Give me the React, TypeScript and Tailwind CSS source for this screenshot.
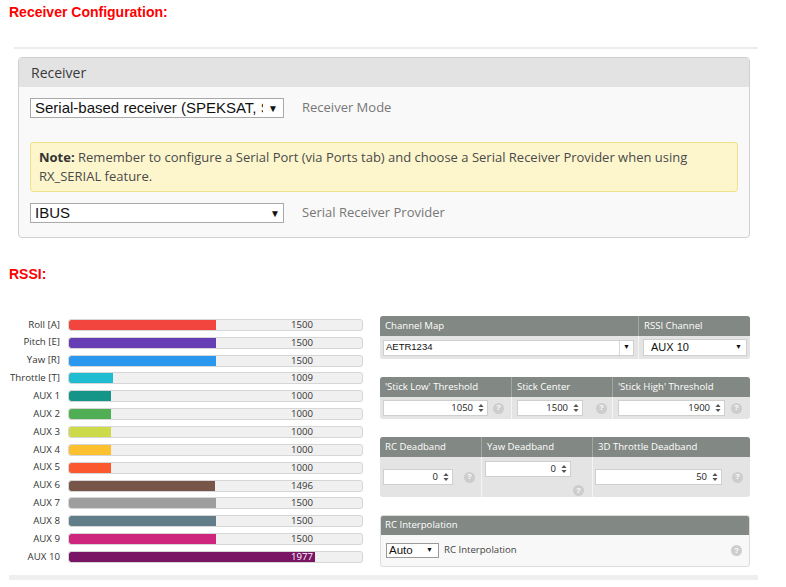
import React from "react";

const SANS = "font-['Open_Sans',sans-serif]";
const ARIAL = "font-['Liberation_Sans',Arial,sans-serif]";

// channel bars: range 800..2200 like the configurator
const CHANNELS: { name: string; value: number; color: string }[] = [
  { name: "Roll [A]", value: 1500, color: "#f1453d" },
  { name: "Pitch [E]", value: 1500, color: "#673fb4" },
  { name: "Yaw [R]", value: 1500, color: "#2b98f0" },
  { name: "Throttle [T]", value: 1009, color: "#1fbcd2" },
  { name: "AUX 1", value: 1000, color: "#159588" },
  { name: "AUX 2", value: 1000, color: "#50ae55" },
  { name: "AUX 3", value: 1000, color: "#cdda49" },
  { name: "AUX 4", value: 1000, color: "#fdc02f" },
  { name: "AUX 5", value: 1000, color: "#fc5830" },
  { name: "AUX 6", value: 1496, color: "#785549" },
  { name: "AUX 7", value: 1500, color: "#9e9e9e" },
  { name: "AUX 8", value: 1500, color: "#617d8a" },
  { name: "AUX 9", value: 1500, color: "#cf267d" },
  { name: "AUX 10", value: 1977, color: "#7a1464" },
];

function Help() {
  return (
    <span className={`inline-flex h-[11px] w-[11px] shrink-0 items-center justify-center rounded-full bg-[#cdcdcd] text-[8px] font-bold leading-none text-white ${ARIAL}`}>
      ?
    </span>
  );
}

function Spinner() {
  return (
    <svg width="6" height="10" viewBox="0 0 6 10" className="shrink-0">
      <path d="M3 1 L5.6 4 H0.4Z M3 9 L5.6 6 H0.4Z" fill="#555" />
    </svg>
  );
}

function NumberBox({ value, width }: { value: string; width: string }) {
  return (
    <div className={`flex h-[16px] shrink-0 items-center justify-end gap-[5px] border border-[#cfcfcf] bg-white pr-[3px] ${width}`}>
      <span className={`text-[9.5px] leading-none text-[#222] ${SANS}`}>{value}</span>
      <Spinner />
    </div>
  );
}

function Bar({ value, color }: { value: number; color: string }) {
  const pct = ((value - 800) / 1400) * 100;
  const covered = pct > 82;
  return (
    <div className="relative h-[12px] w-[295px] overflow-hidden rounded-[3px] border border-[#d6d6d6] bg-[#f0f0f0]">
      <div className="h-full rounded-l-[2px]" style={{ width: `${pct}%`, backgroundColor: color }} />
      <span
        className={`absolute right-[49px] top-0 text-[9.6px] leading-[10px] ${SANS} ${covered ? "text-white" : "text-[#333]"}`}
      >
        {value}
      </span>
    </div>
  );
}

function PanelHead({ children, className = "" }: { children: React.ReactNode; className?: string }) {
  return (
    <div className={`flex h-[20px] items-center pl-[5px] text-[9.6px] text-white ${SANS} ${className}`}>{children}</div>
  );
}

export default function App() {
  return (
    <div className="h-[587px] w-[786px] overflow-hidden bg-white">
      {/* Receiver configuration */}
      <div className={`pl-[9px] pt-[4px] text-[14px] font-bold leading-[16px] text-[#ff0000] ${ARIAL}`}>
        Receiver Configuration:
      </div>
      <div className="ml-[14px] mt-[27px] h-[2px] w-[744px] bg-[#ececec]" />

      <div className="ml-[18px] mt-[8px] w-[732px] overflow-hidden rounded-[4px] border border-[#d0d0d0] bg-[#f9f9f9]">
        <div className={`flex h-[29px] items-center bg-[#e3e3e3] pl-[12px] text-[14px] text-[#3a3a3a] ${SANS}`}>
          Receiver
        </div>
        <div className="px-[11px] pb-[14px] pt-[11px]">
          <div className="flex items-center">
            <div className={`flex h-[20px] w-[254px] items-center border border-[#a9a9a9] bg-white text-[15px] text-[#111] ${ARIAL}`}>
              <span className="w-[232px] overflow-hidden whitespace-nowrap pl-[4px]">
                Serial-based receiver (SPEKSAT, SUMD, SUMH, SBUS)
              </span>
              <span className="flex-1 text-center text-[10px]">▼</span>
            </div>
            <span className={`ml-[18px] text-[13px] text-[#777] ${SANS}`}>Receiver Mode</span>
          </div>

          <div className={`mt-[24px] h-[50px] w-[708px] rounded-[3px] border border-[#efe28b] bg-[#fdf6cd] px-[8px] py-[5px] text-[13px] leading-[19px] text-[#4a4a4a] ${SANS}`}>
            <b className="text-[#333]">Note:</b> Remember to configure a Serial Port (via Ports tab) and choose a Serial
            Receiver Provider when using
            <br />
            RX_SERIAL feature.
          </div>

          <div className="mt-[11px] flex items-center">
            <div className={`flex h-[20px] w-[254px] items-center border border-[#a9a9a9] bg-white text-[15px] text-[#111] ${ARIAL}`}>
              <span className="w-[236px] pl-[4px]">IBUS</span>
              <span className="flex-1 text-center text-[10px]">▼</span>
            </div>
            <span className={`ml-[18px] text-[13px] text-[#777] ${SANS}`}>Serial Receiver Provider</span>
          </div>
        </div>
      </div>

      {/* RSSI */}
      <div className={`mt-[28px] pl-[9px] text-[14px] font-bold leading-[16px] text-[#ff0000] ${ARIAL}`}>RSSI:</div>

      <div className="mt-[34px] flex gap-[17px] pl-[8px]">
        {/* channel bars */}
        <div className="w-[355px]">
          {CHANNELS.map((c) => (
            <div key={c.name} className="flex h-[17.85px] items-center gap-[8px]">
              <span className={`w-[52px] whitespace-nowrap text-right text-[9.7px] text-[#333] ${SANS}`}>{c.name}</span>
              <Bar value={c.value} color={c.color} />
            </div>
          ))}
        </div>

        {/* settings */}
        <div className="flex w-[370px] flex-col gap-[18px]">
          <div className="overflow-hidden rounded-[3px] bg-[#e4e4e4]">
            <div className="grid grid-cols-[258px_112px] bg-[#828884]">
              <PanelHead>Channel Map</PanelHead>
              <PanelHead className="border-l border-[#a4a8a5]">RSSI Channel</PanelHead>
            </div>
            <div className="grid h-[23px] grid-cols-[258px_112px]">
              <div className="flex items-center pl-[3px]">
                <div className={`flex h-[16px] w-[251px] items-center border border-[#cfcfcf] bg-white text-[9.5px] text-[#111] ${ARIAL}`}>
                  <span className="flex-1 pl-[2px]">AETR1234</span>
                  <span className="flex h-full w-[14px] items-center justify-center border-l border-[#d8d8d8] text-[7px]">▼</span>
                </div>
              </div>
              <div className="flex items-center border-l border-[#f4f4f4] pl-[4px]">
                <div className={`flex h-[17px] w-[104px] items-center border border-[#cfcfcf] bg-white text-[11px] text-[#111] ${ARIAL}`}>
                  <span className="flex-1 pl-[7px]">AUX 10</span>
                  <span className="pr-[4px] text-[7px]">▼</span>
                </div>
              </div>
            </div>
          </div>

          <div className="overflow-hidden rounded-[3px] bg-[#e4e4e4]">
            <div className="grid grid-cols-[131px_101px_138px] bg-[#828884]">
              <PanelHead>'Stick Low' Threshold</PanelHead>
              <PanelHead className="border-l border-[#a4a8a5]">Stick Center</PanelHead>
              <PanelHead className="border-l border-[#a4a8a5]">'Stick High' Threshold</PanelHead>
            </div>
            <div className="grid h-[22px] grid-cols-[131px_101px_138px]">
              <div className="flex items-center gap-[5px] pl-[3px]">
                <NumberBox value="1050" width="w-[105px]" />
                <Help />
              </div>
              <div className="flex items-center gap-[13px] border-l border-[#f4f4f4] pl-[5px]">
                <NumberBox value="1500" width="w-[66px]" />
                <Help />
              </div>
              <div className="flex items-center gap-[6px] border-l border-[#f4f4f4] pl-[5px]">
                <NumberBox value="1900" width="w-[107px]" />
                <Help />
              </div>
            </div>
          </div>

          <div className="overflow-hidden rounded-[3px] bg-[#e4e4e4]">
            <div className="grid grid-cols-[101px_111px_158px] bg-[#828884]">
              <PanelHead>RC Deadband</PanelHead>
              <PanelHead className="border-l border-[#a4a8a5]">Yaw Deadband</PanelHead>
              <PanelHead className="border-l border-[#a4a8a5]">3D Throttle Deadband</PanelHead>
            </div>
            <div className="grid h-[40px] grid-cols-[101px_111px_158px]">
              <div className="flex items-center gap-[11px] pl-[3px]">
                <NumberBox value="0" width="w-[70px]" />
                <Help />
              </div>
              <div className="flex flex-col border-l border-[#f4f4f4] pl-[3px] pt-[4px]">
                <NumberBox value="0" width="w-[86px]" />
                <div className="ml-[88px] mt-[8px] flex">
                  <Help />
                </div>
              </div>
              <div className="flex items-center gap-[10px] border-l border-[#f4f4f4] pl-[2px]">
                <NumberBox value="50" width="w-[127px]" />
                <Help />
              </div>
            </div>
          </div>

          <div className="overflow-hidden rounded-[3px] border border-[#dcdcdc] bg-[#f8f8f8]">
            <div className="-mx-px -mt-px bg-[#828884]">
              <PanelHead className="h-[20px]">RC Interpolation</PanelHead>
            </div>
            <div className="flex h-[31px] items-center pl-[5px] pr-[7px]">
              <div className={`flex h-[15px] w-[53px] items-center border border-[#9a9a9a] bg-white text-[11.5px] text-[#111] ${ARIAL}`}>
                <span className="flex-1 pl-[2px]">Auto</span>
                <span className="pr-[5px] text-[7px]">▼</span>
              </div>
              <span className={`ml-[5px] flex-1 text-[9.6px] text-[#444] ${SANS}`}>RC Interpolation</span>
              <Help />
            </div>
          </div>
        </div>
      </div>

      <div className="ml-[9px] mt-[8px] h-[5px] w-[749px] bg-[#efefef]" />
    </div>
  );
}
